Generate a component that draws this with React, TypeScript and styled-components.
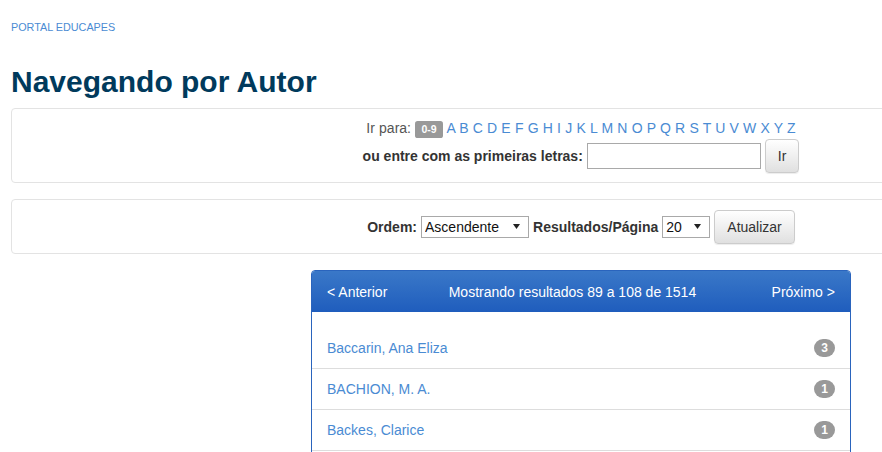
import React from "react";
import styled, { createGlobalStyle } from "styled-components";

const GlobalStyle = createGlobalStyle`
  html, body {
    margin: 0;
    padding: 0;
    overflow: hidden;
    background: #fff;
  }
  body {
    font-family: "Liberation Sans", Arial, Helvetica, sans-serif;
    font-size: 14px;
    line-height: 20px;
    color: #333;
  }
  * { box-sizing: border-box; }
`;

const Page = styled.div`
  width: 1140px;
  margin-left: 11px;
`;

const Breadcrumb = styled.a`
  display: block;
  padding-top: 17px;
  font-size: 10.8px;
  line-height: 20px;
  color: #4a8bd3;
  text-decoration: none;
  text-transform: uppercase;
`;

const Title = styled.h1`
  margin: 28px 0 10px;
  font-size: 30px;
  line-height: 33px;
  font-weight: bold;
  color: #003a5c;
`;

const Well = styled.div<{ $gap?: number }>`
  border: 1px solid #e3e3e3;
  border-radius: 4px;
  padding: 9px;
  margin-bottom: ${(p) => p.$gap ?? 16}px;
  text-align: center;
  background: #fff;
`;

const JumpLine = styled.div`
  line-height: 20px;
  color: #555;
  word-spacing: 0.3px;
`;

const RangeLabel = styled.span`
  display: inline;
  padding: 0.2em 0.6em 0.3em;
  font-size: 75%;
  font-weight: bold;
  line-height: 1;
  color: #fff;
  background: #999;
  border-radius: 0.25em;
  vertical-align: baseline;
`;

const Letter = styled.a`
  color: #4a8bd3;
  text-decoration: none;
`;

const FormRow = styled.div`
  display: flex;
  justify-content: center;
  align-items: center;
  gap: 4px;
  height: 34px;
  margin-top: 1px;
`;

const BoldLabel = styled.label`
  font-weight: bold;
  color: #333;
`;

const TextInput = styled.input`
  width: 174px;
  height: 26px;
  border: 1px solid #a9a9a9;
  padding: 2px 4px;
  font: inherit;
  outline: none;
`;

const Button = styled.button`
  height: 34px;
  padding: 6px 12px;
  font-family: inherit;
  font-size: 14px;
  line-height: 20px;
  color: #333;
  background: linear-gradient(to bottom, #ffffff 0%, #e0e0e0 100%);
  border: 1px solid #ccc;
  border-radius: 4px;
  box-shadow: inset 0 1px 0 rgba(255, 255, 255, 0.15), 0 1px 1px rgba(0, 0, 0, 0.075);
  cursor: pointer;
`;

const SelectWrap = styled.span<{ $w: number }>`
  position: relative;
  display: inline-block;
  width: ${(p) => p.$w}px;
  height: 22px;
`;

const Select = styled.select`
  appearance: none;
  -webkit-appearance: none;
  width: 100%;
  height: 22px;
  border: 1px solid #a9a9a9;
  border-radius: 0;
  background: #fff;
  padding: 0 3px;
  font-family: inherit;
  font-size: 14px;
  color: #111;
  outline: none;
`;

const Arrow = styled.svg`
  position: absolute;
  right: 9px;
  top: 8px;
  pointer-events: none;
`;

const Center = styled.div`
  display: flex;
  justify-content: center;
`;

const Panel = styled.div`
  width: 540px;
  border: 1px solid #2a64bd;
  border-radius: 4px;
  background: #fff;
`;

const PanelHeader = styled.div`
  display: flex;
  justify-content: space-between;
  align-items: center;
  padding: 11px 15px 10px;
  line-height: 20px;
  color: #fff;
  background: linear-gradient(to bottom, #3a78c8 0%, #1f5dbd 100%);
  border-radius: 3px 3px 0 0;
`;

const HeaderLink = styled.a`
  color: #fff;
  text-decoration: none;
`;

const HeaderInfo = styled.span`
  margin-right: 14px;
`;

const List = styled.ul`
  list-style: none;
  margin: 0;
  padding: 16px 0 15px;
`;

const Item = styled.li`
  display: flex;
  justify-content: space-between;
  align-items: center;
  padding: 10px 15px;
  line-height: 20px;
  border-bottom: 1px solid #ddd;
`;

const ItemLink = styled.a`
  color: #4a8bd3;
  text-decoration: none;
`;

const Badge = styled.span`
  display: inline-block;
  min-width: 10px;
  padding: 3px 7px;
  font-size: 12px;
  font-weight: bold;
  line-height: 1;
  color: #fff;
  text-align: center;
  background: #999;
  border-radius: 10px;
`;

const letters = "ABCDEFGHIJKLMNOPQRSTUVWXYZ".split("");

const authors: [string, number][] = [
  ["Baccarin, Ana Eliza", 3],
  ["BACHION, M. A.", 1],
  ["Backes, Clarice", 1],
];

const DropArrow = () => (
  <Arrow width="7" height="5" viewBox="0 0 7 5">
    <path d="M0 0 H7 L3.5 5 Z" fill="#222" />
  </Arrow>
);

export default function App() {
  return (
    <>
      <GlobalStyle />
      <Page>
        <Breadcrumb href="#">Portal eduCAPES</Breadcrumb>
        <Title>Navegando por Autor</Title>

        <Well>
          <JumpLine>
            Ir para: <RangeLabel>0-9</RangeLabel>{" "}
            {letters.map((l, i) => (
              <React.Fragment key={l}>
                <Letter href="#">{l}</Letter>
                {i < letters.length - 1 ? " " : ""}
              </React.Fragment>
            ))}
          </JumpLine>
          <FormRow>
            <BoldLabel>ou entre com as primeiras letras:</BoldLabel>
            <TextInput type="text" />
            <Button>Ir</Button>
          </FormRow>
        </Well>

        <Well>
          <FormRow>
            <BoldLabel>Ordem:</BoldLabel>
            <SelectWrap $w={108}>
              <Select defaultValue="ASC">
                <option value="ASC">Ascendente</option>
                <option value="DESC">Descendente</option>
              </Select>
              <DropArrow />
            </SelectWrap>
            <BoldLabel>Resultados/Página</BoldLabel>
            <SelectWrap $w={48}>
              <Select defaultValue="20">
                <option value="5">5</option>
                <option value="10">10</option>
                <option value="20">20</option>
                <option value="40">40</option>
              </Select>
              <DropArrow />
            </SelectWrap>
            <Button>Atualizar</Button>
          </FormRow>
        </Well>

        <Center>
          <Panel>
            <PanelHeader>
              <HeaderLink href="#">&lt; Anterior</HeaderLink>
              <HeaderInfo>Mostrando resultados 89 a 108 de 1514</HeaderInfo>
              <HeaderLink href="#">Próximo &gt;</HeaderLink>
            </PanelHeader>
            <List>
              {authors.map(([name, n]) => (
                <Item key={name}>
                  <ItemLink href="#">{name}</ItemLink>
                  <Badge>{n}</Badge>
                </Item>
              ))}
            </List>
          </Panel>
        </Center>
      </Page>
    </>
  );
}
